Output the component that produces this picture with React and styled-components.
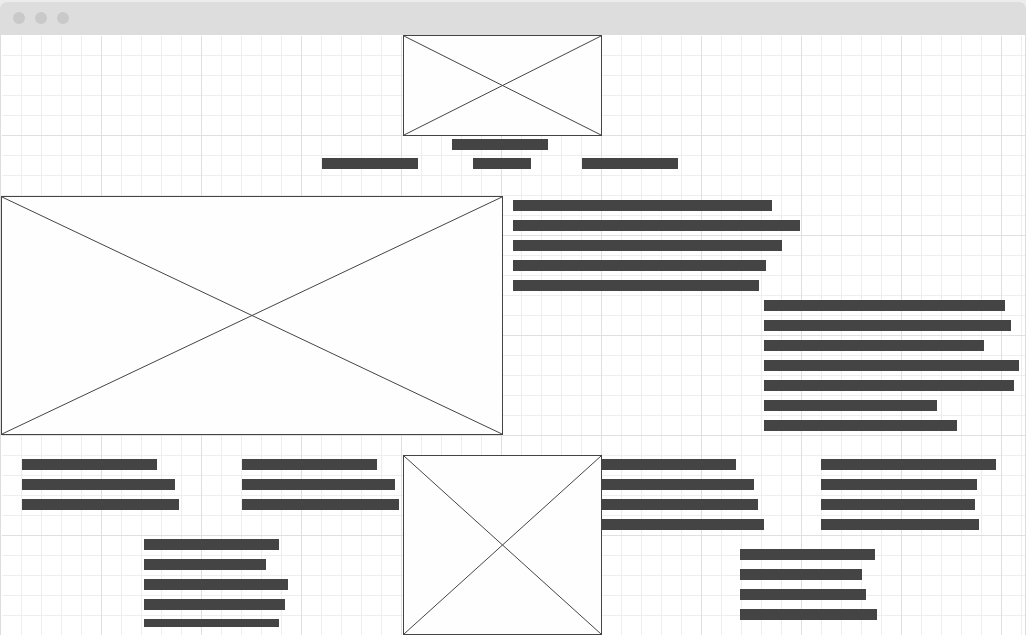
import React from "react";
import styled, { createGlobalStyle } from "styled-components";

const GlobalStyle = createGlobalStyle`
  *, *::before, *::after { box-sizing: border-box; }
  body {
    margin: 0;
    background: #ececec;
    font-family: "Liberation Sans", sans-serif;
  }
`;

const BrowserWindow = styled.div`
  display: flex;
  flex-direction: column;
  min-height: 100vh;
  padding-top: 2px;
`;

const TitleBar = styled.header`
  display: flex;
  align-items: flex-start;
  gap: 10px;
  height: 33px;
  padding: 10px 13px;
  background: #ddd;
  border-radius: 7px 7px 0 0;
`;

const WindowDot = styled.span`
  width: 12px;
  height: 12px;
  border-radius: 50%;
  background: #c9c9c9;
`;

const gridLines = (direction, color, size) =>
  `linear-gradient(${direction}, transparent ${size - 1}px, ${color} ${size - 1}px) 1px 1px / ${
    direction === "to right" ? `${size}px 100%` : `100% ${size}px`
  } ${direction === "to right" ? "repeat-x" : "repeat-y"}`;

const Canvas = styled.main`
  flex: 1;
  border: solid #ddd;
  border-width: 0 1px;
  background:
    linear-gradient(#fff, #fff) 0 0 / 100% 1px no-repeat,
    linear-gradient(#fff, #fff) 0 0 / 1px 100% no-repeat,
    ${gridLines("to right", "#e0e0e0", 100)},
    ${gridLines("to bottom", "#e0e0e0", 100)},
    ${gridLines("to right", "#eeeeee", 20)},
    ${gridLines("to bottom", "#eeeeee", 20)},
    #fff;
`;

const Picture = styled.div`
  height: ${(p) => p.$height}px;
  border: 1px solid #444;
  background: #fefefe;

  svg {
    display: block;
    width: 100%;
    height: 100%;
  }

  line {
    stroke: #444;
    stroke-width: 1;
  }
`;

const Bar = styled.div`
  width: ${(p) => p.$width}px;
  max-width: 100%;
  height: ${(p) => (p.$short ? 8 : 11)}px;
  background: #444;
`;

const Masthead = styled.section`
  display: grid;
  grid-template-columns: 402fr 199fr 423fr;

  & > ${Picture} { grid-column: 2; }
`;

const Heading = styled.section`
  display: flex;
  flex-direction: column;
  align-items: center;
  gap: 8px;
  padding: 3px 26px 27px 0;
`;

const Menu = styled.nav`
  display: grid;
  grid-template-columns: 151px 109px 96px;
`;

const Hero = styled.section`
  display: grid;
  grid-template-columns: 502fr 522fr;
`;

const HeroCopy = styled.div`
  display: grid;
  grid-template-columns: 1fr 1fr;
  align-content: start;
  gap: 9px 0;
  padding: 4px 10px;
`;

const Paragraph = styled.div`
  display: flex;
  flex-direction: column;
  gap: 9px;
`;

const LeadParagraph = styled(Paragraph)`
  grid-column: 1 / -1;
`;

const AsideParagraph = styled(Paragraph)`
  grid-column: 2;
  /* long lines may run into the column's right padding */
  margin-right: -10px;
`;

const Features = styled.section`
  display: grid;
  grid-template-columns: 402fr 199fr 423fr;
  padding-top: 20px;
`;

const FeatureSide = styled.div`
  padding-top: 4px;
`;

const FeaturePair = styled.div`
  display: grid;
  grid-template-columns: ${(p) => p.$columns};
  padding-left: ${(p) => p.$inset}px;
`;

const FeatureNote = styled.div`
  padding-top: ${(p) => p.$top}px;
  padding-left: ${(p) => p.$inset}px;
`;

function CrossedPicture({ height, label }) {
  return (
    <Picture $height={height} role="img" aria-label={label}>
      <svg aria-hidden="true">
        <line x1="0" y1="0" x2="100%" y2="100%" />
        <line x1="100%" y1="0" x2="0" y2="100%" />
      </svg>
    </Picture>
  );
}

function Lines({ widths, as: Block = Paragraph, shortLast = false }) {
  return (
    <Block>
      {widths.map((width, i) => (
        <Bar key={i} $width={width} $short={shortLast && i === widths.length - 1} />
      ))}
    </Block>
  );
}

export default function App() {
  return (
    <>
      <GlobalStyle />
      <BrowserWindow>
        <TitleBar>
          <WindowDot />
          <WindowDot />
          <WindowDot />
        </TitleBar>
        <Canvas>
          <Masthead>
            <CrossedPicture height={101} label="Logo" />
          </Masthead>
          <Heading>
            <Bar $width={96} />
            <Menu>
              <Bar $width={96} />
              <Bar $width={58} />
              <Bar $width={96} />
            </Menu>
          </Heading>
          <Hero>
            <CrossedPicture height={239} label="Main picture" />
            <HeroCopy>
              <Lines as={LeadParagraph} widths={[259, 287, 269, 253, 246]} />
              <Lines as={AsideParagraph} widths={[241, 247, 220, 255, 250, 173, 193]} />
            </HeroCopy>
          </Hero>
          <Features>
            <FeatureSide>
              <FeaturePair $columns="220fr 161fr" $inset={21}>
                <Lines widths={[135, 153, 157]} />
                <Lines widths={[135, 153, 157]} />
              </FeaturePair>
              <FeatureNote $top={29} $inset={143}>
                <Lines widths={[135, 122, 144, 141, 135]} shortLast />
              </FeatureNote>
            </FeatureSide>
            <CrossedPicture height={180} label="Feature picture" />
            <FeatureSide>
              <FeaturePair $columns="219fr 204fr" $inset={0}>
                <Lines widths={[134, 152, 156, 162]} />
                <Lines widths={[175, 156, 154, 158]} />
              </FeaturePair>
              <FeatureNote $top={19} $inset={138}>
                <Lines widths={[135, 122, 126, 137]} />
              </FeatureNote>
            </FeatureSide>
          </Features>
        </Canvas>
      </BrowserWindow>
    </>
  );
}
